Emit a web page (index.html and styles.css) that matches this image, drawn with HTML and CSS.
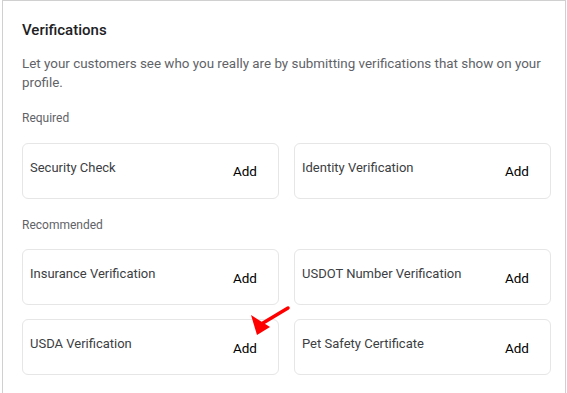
FILE: index.html
```html
<!DOCTYPE html>
<html>
<head>
    <title>Verifications</title>
    <link rel="stylesheet" href="styles.css">
</head>
<body>
    <div class="panel">
        <h2 class="panel-title">Verifications</h2>
        <p class="panel-desc">Let your customers see who you really are by submitting verifications that show on your profile.</p>

        <div class="group-label">Required</div>
        <div class="verify-grid">
            <div class="verify-card">
                <span class="verify-name">Security Check</span>
                <button class="verify-add">Add</button>
            </div>
            <div class="verify-card">
                <span class="verify-name">Identity Verification</span>
                <button class="verify-add">Add</button>
            </div>
        </div>

        <div class="group-label">Recommended</div>
        <div class="verify-grid">
            <div class="verify-card">
                <span class="verify-name">Insurance Verification</span>
                <button class="verify-add">Add</button>
            </div>
            <div class="verify-card">
                <span class="verify-name">USDOT Number Verification</span>
                <button class="verify-add">Add</button>
            </div>
            <div class="verify-card">
                <span class="verify-name">USDA Verification</span>
                <button class="verify-add">Add</button>
                <!-- annotation arrow pointing at the Add button -->
                <svg class="pointer" width="50" height="40" viewBox="0 0 50 40">
                    <line x1="43" y1="7" x2="18" y2="22" stroke="#f00" stroke-width="3.5" stroke-linecap="round"/>
                    <polygon points="12,34 6,14 25,26" fill="#f00"/>
                </svg>
            </div>
            <div class="verify-card">
                <span class="verify-name">Pet Safety Certificate</span>
                <button class="verify-add">Add</button>
            </div>
        </div>
    </div>
</body>
</html>
```

FILE: styles.css
```css
body {
    margin: 0;
    padding-left: 2px;
    font-family: Roboto, "Liberation Sans", sans-serif;
    background-color: #fff;
}
.panel {
    width: 564px;
    height: 393px;
    box-sizing: border-box;
    border: 1px solid #d0d0d0;
    border-bottom: none;
    padding: 19px 14px 0 19px;
}
.panel-title {
    margin: 0;
    font-size: 15px;
    line-height: 20px;
    font-weight: 500;
    color: #202124;
}
.panel-desc {
    margin: 14px 0 0;
    font-size: 13.4px;
    line-height: 19px;
    color: #5f6368;
}
.group-label {
    margin-top: 18px;
    font-size: 12px;
    line-height: 16px;
    color: #5f6368;
}
.verify-grid {
    display: grid;
    grid-template-columns: 257px 257px;
    column-gap: 15px;
    row-gap: 14px;
    margin-top: 16.5px;
}
.verify-card {
    position: relative;
    height: 56px;
    box-sizing: border-box;
    border: 1px solid #e6e6e6;
    border-radius: 6px;
    display: flex;
    justify-content: space-between;
    align-items: center;
    padding: 0 21px 0 7px;
}
.verify-name {
    align-self: flex-start;
    margin-top: 16px;
    font-size: 13px;
    line-height: 16px;
    color: #3c4043;
}
.verify-add {
    background: none;
    border: none;
    padding: 0;
    margin-top: 1px;
    font-family: inherit;
    font-size: 13.5px;
    font-weight: 400;
    color: #000;
    cursor: pointer;
}
.pointer {
    position: absolute;
    left: 222px;
    top: -19px;
}
```
